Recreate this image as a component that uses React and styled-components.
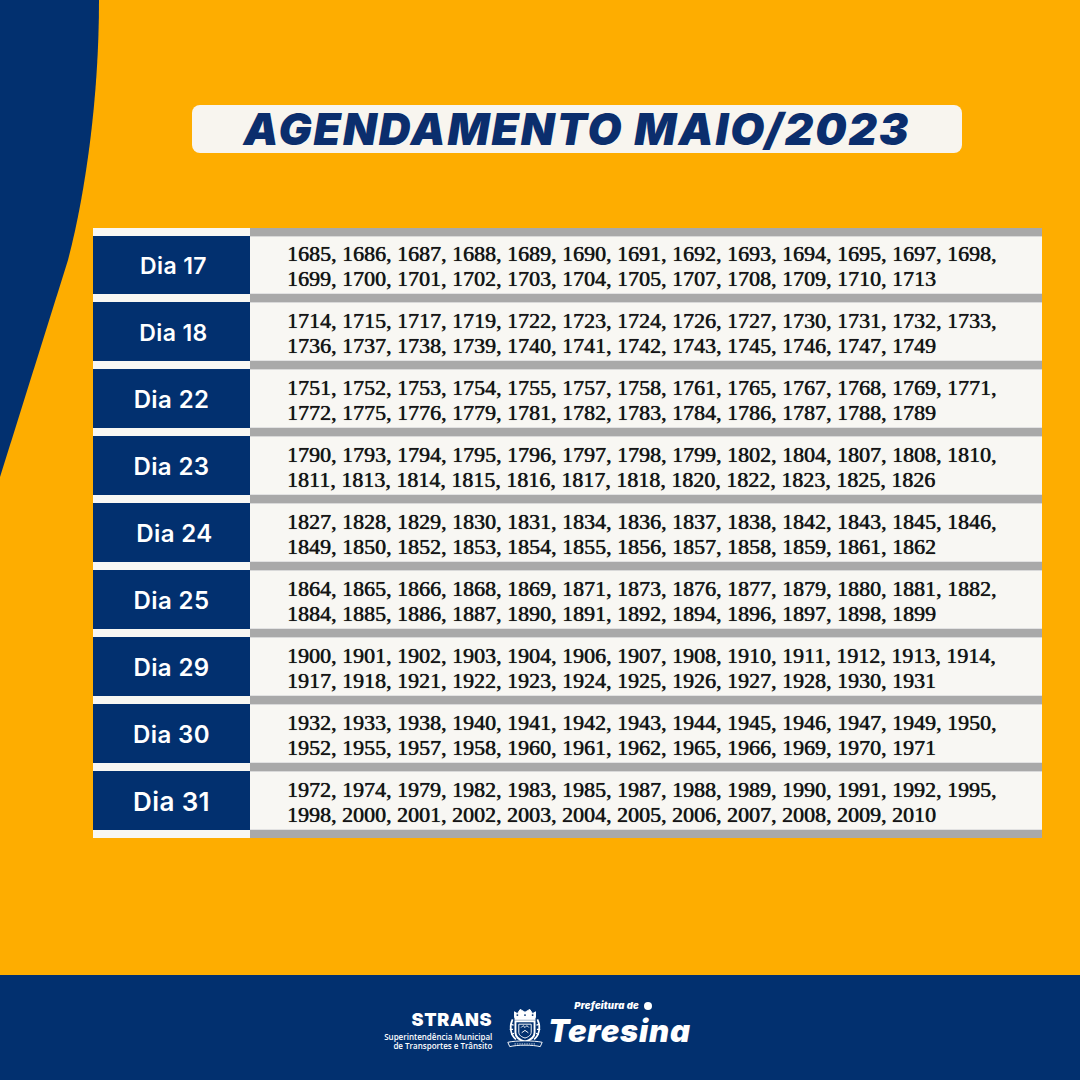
import React from 'react';
import styled, { createGlobalStyle } from 'styled-components';

const GlobalStyle = createGlobalStyle`
  html, body {
    margin: 0;
    padding: 0;
    background: #fead00;
  }
  * {
    box-sizing: border-box;
  }
`;

const NAVY = '#02306f';
const ORANGE = '#fead00';

const Page = styled.div`
  position: relative;
  width: 1080px;
  height: 1080px;
  overflow: hidden;
  background: ${ORANGE};
  display: flex;
  flex-direction: column;
  font-family: 'Inter', 'Open Sans', sans-serif;
`;

const Curve = styled.svg`
  position: absolute;
  left: 0;
  top: 0;
`;

const Content = styled.main`
  position: relative;
  flex: 1;
  display: flex;
  flex-direction: column;
  padding-top: 105px;
`;

const TitleBox = styled.div`
  margin-left: 192px;
  width: 770px;
  height: 48px;
  border-radius: 8px;
  background: #f8f5ef;
  display: flex;
  align-items: center;
  justify-content: center;
`;

const Title = styled.h1`
  margin: 0;
  font-family: 'Inter', sans-serif;
  font-weight: 900;
  font-style: italic;
  font-size: 44px;
  letter-spacing: 2px;
  line-height: 1;
  color: #0b2e6d;
`;

const Table = styled.div`
  margin-top: 75px;
  margin-left: 93px;
  width: 949px;
  display: flex;
  flex-direction: column;
`;

const Row = styled.div`
  display: grid;
  grid-template-columns: 157px 1fr;
  height: ${p => p.h || 67}px;
`;

const Label = styled.div`
  border-top: 8px solid #f8f7f3;
  background: ${NAVY};
  color: #fff;
  display: flex;
  align-items: center;
  justify-content: center;
  font-family: 'Inter', 'Open Sans', sans-serif;
  font-weight: 600;
  font-size: ${p => p.size}px;
  letter-spacing: 0.4px;
  padding-top: 2px;
  padding-left: ${p => p.shift || 0}px;
`;

const Numbers = styled.div`
  border-top: 8px solid #a9a9a9;
  background: #f8f7f3;
  box-shadow: inset 0 1px 0 #d9d9d9, inset 0 -1px 0 #e2e2e2;
  padding-left: 37px;
  padding-top: 2px;
  display: flex;
  flex-direction: column;
  justify-content: center;
  font-family: 'Liberation Serif', 'Times New Roman', serif;
  font-size: 22px;
  line-height: 25px;
  color: #151515;
  white-space: nowrap;
  text-shadow: 0.35px 0 0 #151515, 0 0 1px rgba(0, 0, 0, 0.5);
`;

const EndRow = styled.div`
  display: grid;
  grid-template-columns: 157px 1fr;
  height: 8px;
`;

const EndLeft = styled.div`
  background: #f8f7f3;
`;

const EndRight = styled.div`
  background: #a9a9a9;
`;

const Footer = styled.footer`
  height: 105px;
  background: ${NAVY};
  display: flex;
  align-items: center;
  justify-content: center;
  padding-right: 5px;
`;

const Strans = styled.div`
  display: flex;
  flex-direction: column;
  align-items: flex-end;
  color: #fff;
  margin-top: 4px;
`;

const StransName = styled.div`
  font-family: 'Inter', sans-serif;
  font-weight: 900;
  font-size: 18px;
  letter-spacing: 0.7px;
  line-height: 22px;
  margin-bottom: -2px;
`;

const StransSub = styled.div`
  font-family: 'Open Sans', sans-serif;
  font-weight: 600;
  font-size: 8px;
  line-height: 11px;
  text-align: right;
  margin-top: 2px;
`;

const SubLine = styled.div`
  margin-top: ${p => (p.second ? -2 : 0)}px;
`;

const CrestWrap = styled.div`
  margin: 0 2px 0 12px;
  display: flex;
`;

const Prefeitura = styled.div`
  display: flex;
  flex-direction: column;
  color: #fff;
  font-family: 'Inter', sans-serif;
  font-style: italic;
  font-weight: 900;
  margin-top: -6px;
`;

const PrefSmall = styled.div`
  font-size: 9.5px;
  line-height: 12px;
  margin-left: 26px;
  letter-spacing: 0.2px;
  display: flex;
  align-items: center;
  gap: 5px;
  &::after {
    content: '';
    width: 8px;
    height: 8px;
    border-radius: 50%;
    background: #fff;
  }
`;

const PrefBig = styled.div`
  font-size: 31px;
  line-height: 37px;
  letter-spacing: 0.8px;
`;

const rows = [
  ['Dia 17', 23, 4, '1685, 1686, 1687, 1688, 1689, 1690, 1691, 1692, 1693, 1694, 1695, 1697, 1698,', '1699, 1700, 1701, 1702, 1703, 1704, 1705, 1707, 1708, 1709, 1710, 1713'],
  ['Dia 18', 23, 4, '1714, 1715, 1717, 1719, 1722, 1723, 1724, 1726, 1727, 1730, 1731, 1732, 1733,', '1736, 1737, 1738, 1739, 1740, 1741, 1742, 1743, 1745, 1746, 1747, 1749'],
  ['Dia 22', 24, 0, '1751, 1752, 1753, 1754, 1755, 1757, 1758, 1761, 1765, 1767, 1768, 1769, 1771,', '1772, 1775, 1776, 1779, 1781, 1782, 1783, 1784, 1786, 1787, 1788, 1789'],
  ['Dia 23', 24, 0, '1790, 1793, 1794, 1795, 1796, 1797, 1798, 1799, 1802, 1804, 1807, 1808, 1810,', '1811, 1813, 1814, 1815, 1816, 1817, 1818, 1820, 1822, 1823, 1825, 1826'],
  ['Dia 24', 24, 6, '1827, 1828, 1829, 1830, 1831, 1834, 1836, 1837, 1838, 1842, 1843, 1845, 1846,', '1849, 1850, 1852, 1853, 1854, 1855, 1856, 1857, 1858, 1859, 1861, 1862'],
  ['Dia 25', 24, 0, '1864, 1865, 1866, 1868, 1869, 1871, 1873, 1876, 1877, 1879, 1880, 1881, 1882,', '1884, 1885, 1886, 1887, 1890, 1891, 1892, 1894, 1896, 1897, 1898, 1899'],
  ['Dia 29', 24, 0, '1900, 1901, 1902, 1903, 1904, 1906, 1907, 1908, 1910, 1911, 1912, 1913, 1914,', '1917, 1918, 1921, 1922, 1923, 1924, 1925, 1926, 1927, 1928, 1930, 1931'],
  ['Dia 30', 24, 0, '1932, 1933, 1938, 1940, 1941, 1942, 1943, 1944, 1945, 1946, 1947, 1949, 1950,', '1952, 1955, 1957, 1958, 1960, 1961, 1962, 1965, 1966, 1969, 1970, 1971'],
  ['Dia 31', 26, 0, '1972, 1974, 1979, 1982, 1983, 1985, 1987, 1988, 1989, 1990, 1991, 1992, 1995,', '1998, 2000, 2001, 2002, 2003, 2004, 2005, 2006, 2007, 2008, 2009, 2010'],
];

function Crest() {
  return (
    <svg width="42" height="44" viewBox="0 0 44 44" fill="none" stroke="#fff">
      {/* crown */}
      <path d="M11 11 L11 5 L14 7 L17 2.5 L22 5.5 L27 2.5 L30 7 L33 5 L33 11 Z" fill="#fff" strokeWidth="1" />
      <circle cx="14" cy="8.5" r="1" fill={NAVY} stroke="none" />
      <circle cx="22" cy="8.5" r="1" fill={NAVY} stroke="none" />
      <circle cx="30" cy="8.5" r="1" fill={NAVY} stroke="none" />
      <rect x="11" y="11" width="22" height="2.5" fill="#fff" stroke="none" />
      {/* shield */}
      <path d="M12 15 H32 V27 C32 32 28 34.5 22 36.5 C16 34.5 12 32 12 27 Z" strokeWidth="2" fill={NAVY} />
      <path d="M15.5 18 H28.5 V26.5 C28.5 29.5 25.5 31.5 22 32.5 C18.5 31.5 15.5 29.5 15.5 26.5 Z" strokeWidth="1" />
      <path d="M18 21.5 L20 19.5 L22 21.5 L24 19.5 L26 21.5" strokeWidth="1" />
      <path d="M18.5 27 L22 24.5 L25.5 27" strokeWidth="1" />
      {/* side branches */}
      <path d="M9 13 C5.5 20 6.5 29 12.5 34" strokeWidth="1.8" />
      <path d="M35 13 C38.5 20 37.5 29 31.5 34" strokeWidth="1.8" />
      <path d="M6.5 18 L10 19 M6 23.5 L9.5 23.5 M7.5 29 L10.5 27.5" strokeWidth="1.3" />
      <path d="M37.5 18 L34 19 M38 23.5 L34.5 23.5 M36.5 29 L33.5 27.5" strokeWidth="1.3" />
      {/* ribbon */}
      <path d="M4 37 C12 35 32 35 40 37 L38 41.5 C30 39.5 14 39.5 6 41.5 Z" strokeWidth="1" fill={NAVY} />
      <path d="M11 38.7 H33" strokeWidth="0.8" strokeDasharray="1.5 1" />
    </svg>
  );
}

export default function App() {
  return (
    <>
      <GlobalStyle />
      <Page>
        <Curve width="120" height="500" viewBox="0 0 120 500">
          <path d="M0 0 H99 C99 100 85 195 68 260 L0 477 Z" fill={NAVY} />
        </Curve>
        <Content>
          <TitleBox>
            <Title>AGENDAMENTO MAIO/2023</Title>
          </TitleBox>
          <Table>
            {rows.map(([label, size, shift, a, b], i) => (
              <Row key={label} h={i === 0 ? 66 : 67}>
                <Label size={size} shift={shift}>{label}</Label>
                <Numbers>
                  <div>{a}</div>
                  <div>{b}</div>
                </Numbers>
              </Row>
            ))}
            <EndRow>
              <EndLeft />
              <EndRight />
            </EndRow>
          </Table>
        </Content>
        <Footer>
          <Strans>
            <StransName>STRANS</StransName>
            <StransSub>
              <SubLine>Superintendência Municipal</SubLine>
              <SubLine second>de Transportes e Trânsito</SubLine>
            </StransSub>
          </Strans>
          <CrestWrap>
            <Crest />
          </CrestWrap>
          <Prefeitura>
            <PrefSmall>Prefeitura de</PrefSmall>
            <PrefBig>Teresina</PrefBig>
          </Prefeitura>
        </Footer>
      </Page>
    </>
  );
}
